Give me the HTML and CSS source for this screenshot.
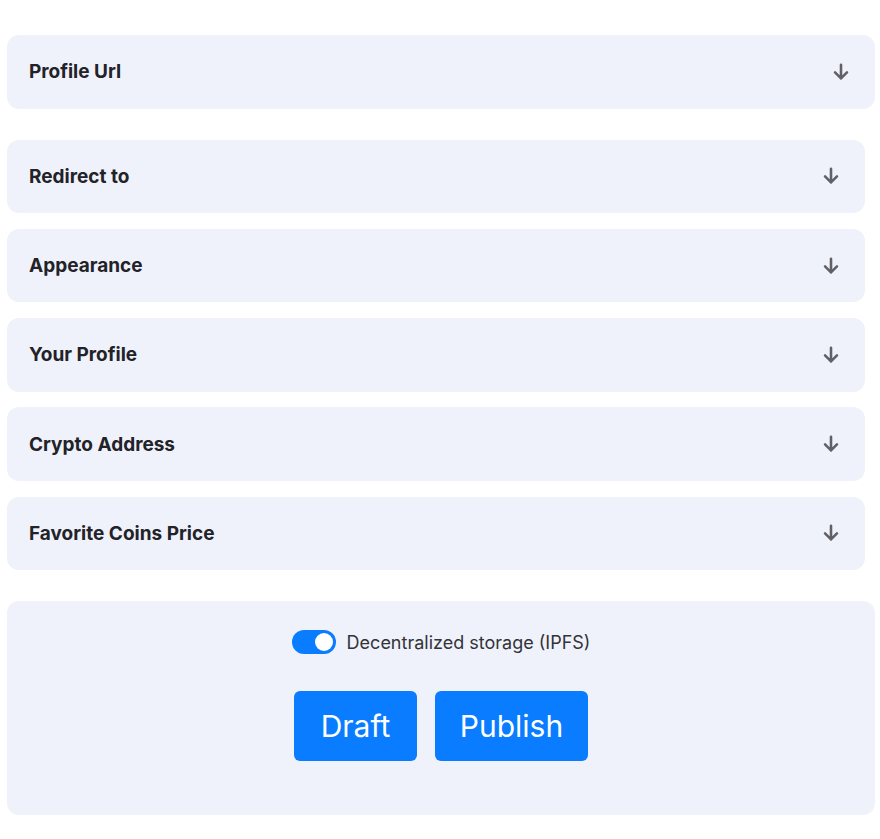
FILE: index.html
```html
<!DOCTYPE html>
<html>
<head>
<meta charset="utf-8">
<link rel="stylesheet" href="styles.css">
</head>
<body>
<div class="page">
  <div class="card card-wide">
    <span class="title">Profile Url</span>
    <svg class="arrow" viewBox="0 0 24 24"><path d="M12 4v15M5.5 12.5L12 19l6.5-6.5" fill="none" stroke="#606066" stroke-width="2.8" stroke-linecap="round" stroke-linejoin="round"/></svg>
  </div>
  <div class="group">
    <div class="card">
      <span class="title">Redirect to</span>
      <svg class="arrow" viewBox="0 0 24 24"><path d="M12 4v15M5.5 12.5L12 19l6.5-6.5" fill="none" stroke="#606066" stroke-width="2.8" stroke-linecap="round" stroke-linejoin="round"/></svg>
    </div>
    <div class="card">
      <span class="title">Appearance</span>
      <svg class="arrow" viewBox="0 0 24 24"><path d="M12 4v15M5.5 12.5L12 19l6.5-6.5" fill="none" stroke="#606066" stroke-width="2.8" stroke-linecap="round" stroke-linejoin="round"/></svg>
    </div>
    <div class="card">
      <span class="title">Your Profile</span>
      <svg class="arrow" viewBox="0 0 24 24"><path d="M12 4v15M5.5 12.5L12 19l6.5-6.5" fill="none" stroke="#606066" stroke-width="2.8" stroke-linecap="round" stroke-linejoin="round"/></svg>
    </div>
    <div class="card">
      <span class="title">Crypto Address</span>
      <svg class="arrow" viewBox="0 0 24 24"><path d="M12 4v15M5.5 12.5L12 19l6.5-6.5" fill="none" stroke="#606066" stroke-width="2.8" stroke-linecap="round" stroke-linejoin="round"/></svg>
    </div>
    <div class="card">
      <span class="title">Favorite Coins Price</span>
      <svg class="arrow" viewBox="0 0 24 24"><path d="M12 4v15M5.5 12.5L12 19l6.5-6.5" fill="none" stroke="#606066" stroke-width="2.8" stroke-linecap="round" stroke-linejoin="round"/></svg>
    </div>
  </div>
  <div class="panel">
    <div class="toggle-row">
      <span class="toggle"><span class="knob"></span></span>
      <span class="toggle-label">Decentralized storage (IPFS)</span>
    </div>
    <div class="buttons">
      <button class="btn btn-draft">Draft</button>
      <button class="btn btn-publish">Publish</button>
    </div>
  </div>
</div>
</body>
</html>
```
FILE: styles.css
```css
html, body {
  margin: 0;
  padding: 0;
  background: #ffffff;
}
body {
  font-family: Inter, "Noto Sans", "Liberation Sans", sans-serif;
  color: #222228;
}
.page {
  padding: 35px 5px 0 7px;
  width: 868px;
  display: flex;
  flex-direction: column;
}
.card {
  box-sizing: border-box;
  height: 73.5px;
  background: #eff2fb;
  border-radius: 12px;
  display: flex;
  align-items: center;
  justify-content: space-between;
  padding: 0 23px 0 22px;
  width: 858px;
}
.card-wide {
  width: 868px;
}
.group {
  margin-top: 31px;
  display: flex;
  flex-direction: column;
  gap: 15.75px;
}
.title {
  font-size: 19px;
  font-weight: 700;
  color: #222228;
}
.arrow {
  width: 22px;
  height: 22px;
  display: block;
}
.panel {
  box-sizing: border-box;
  margin-top: 31px;
  width: 868px;
  height: 214px;
  background: #eff2fb;
  border-radius: 12px;
  padding-top: 29px;
  display: flex;
  flex-direction: column;
  align-items: center;
}
.toggle-row {
  display: flex;
  align-items: center;
  gap: 11px;
}
.toggle {
  width: 44px;
  height: 24px;
  border-radius: 12px;
  background: #0a7cff;
  display: flex;
  align-items: center;
  justify-content: flex-end;
  padding: 0 3px;
  box-sizing: border-box;
}
.knob {
  width: 18px;
  height: 18px;
  border-radius: 50%;
  background: #ffffff;
}
.toggle-label {
  font-size: 18px;
  color: #333338;
}
.buttons {
  margin-top: 37px;
  display: flex;
  gap: 18px;
}
.btn {
  height: 70px;
  border: none;
  border-radius: 6px;
  background: #0a7cff;
  color: #ffffff;
  font-family: Inter, "Noto Sans", "Liberation Sans", sans-serif;
  font-size: 30px;
  font-weight: 400;
  padding: 0;
}
.btn-draft { width: 123px; }
.btn-publish { width: 153px; }
```
